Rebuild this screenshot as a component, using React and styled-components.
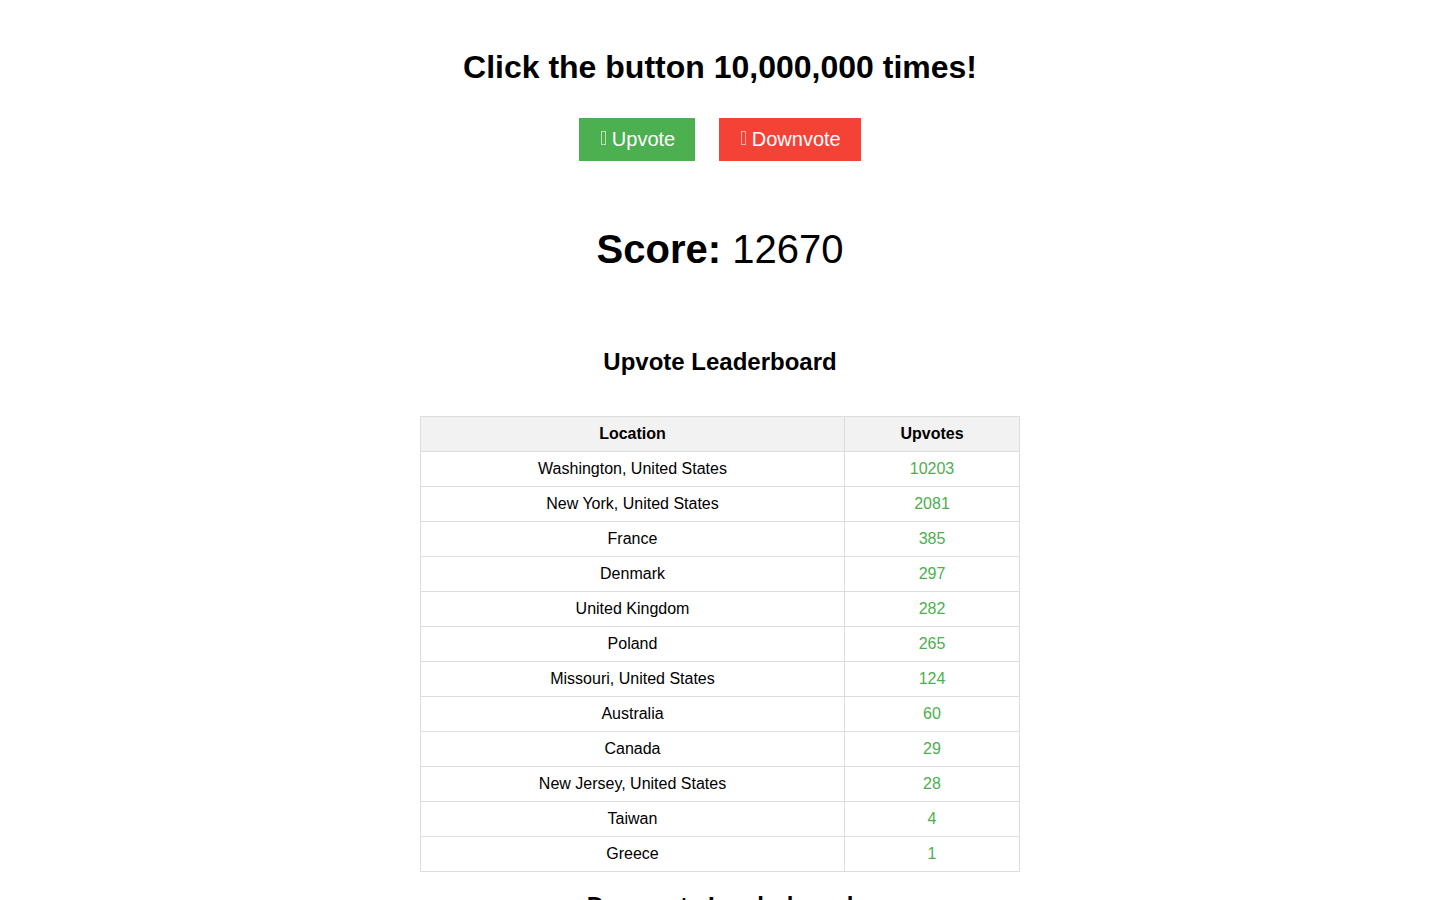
import React from "react";
import styled, { createGlobalStyle } from "styled-components";

const GlobalStyle = createGlobalStyle`
  html, body {
    margin: 0;
    padding: 0;
    background: #ffffff;
  }
  body {
    font-family: "Liberation Sans", Arial, sans-serif;
    color: #000000;
  }
`;

const Page = styled.main`
  display: flex;
  flex-direction: column;
  align-items: center;
  padding-top: 49px;
`;

const Title = styled.h1`
  margin: 0;
  font-size: 32px;
  font-weight: 700;
  line-height: 37px;
`;

const ButtonRow = styled.div`
  display: flex;
  gap: 24px;
  margin-top: 32px;
`;

const VoteButton = styled.button`
  border: none;
  border-radius: 0;
  padding: 10px 20px;
  font-family: "Liberation Sans", Arial, sans-serif;
  font-size: 20px;
  line-height: 23px;
  color: #ffffff;
  background: ${(p) => (p.$kind === "down" ? "#f44336" : "#4caf50")};
  cursor: pointer;
`;

/* Placeholder box where the icon-font glyph would sit */
const IconBox = styled.span`
  display: inline-block;
  box-sizing: border-box;
  width: 5px;
  height: 14px;
  margin: 0 0 0 2px;
  border: 1px solid rgba(255, 255, 255, 0.6);
  vertical-align: 1px;
`;

const Score = styled.div`
  margin-top: 65px;
  font-size: 40px;
  line-height: 46px;
  strong {
    font-weight: 700;
  }
`;

const SectionTitle = styled.h2`
  margin: ${(p) => p.$top}px 0 0;
  font-size: 24px;
  font-weight: 700;
  line-height: 28px;
`;

const Board = styled.table`
  margin-top: 40px;
  width: 600px;
  border-collapse: collapse;
  font-size: 16px;
`;

const HeadCell = styled.th`
  background: #f2f2f2;
  border: 1px solid #dddddd;
  padding: 8px;
  font-weight: 700;
  line-height: 18px;
  text-align: center;
  width: ${(p) => p.$w || "auto"};
`;

const Cell = styled.td`
  border: 1px solid #dddddd;
  padding: 8px;
  line-height: 18px;
  text-align: center;
  color: ${(p) => (p.$count ? "#4caf50" : "#000000")};
`;

const rows = [
  ["Washington, United States", 10203],
  ["New York, United States", 2081],
  ["France", 385],
  ["Denmark", 297],
  ["United Kingdom", 282],
  ["Poland", 265],
  ["Missouri, United States", 124],
  ["Australia", 60],
  ["Canada", 29],
  ["New Jersey, United States", 28],
  ["Taiwan", 4],
  ["Greece", 1],
];

export default function App() {
  return (
    <>
      <GlobalStyle />
      <Page>
        <Title>Click the button 10,000,000 times!</Title>
        <ButtonRow>
          <VoteButton $kind="up">
            <IconBox /> Upvote
          </VoteButton>
          <VoteButton $kind="down">
            <IconBox /> Downvote
          </VoteButton>
        </ButtonRow>
        <Score>
          <strong>Score:</strong> 12670
        </Score>
        <SectionTitle $top={76}>Upvote Leaderboard</SectionTitle>
        <Board>
          <thead>
            <tr>
              <HeadCell $w="407px">Location</HeadCell>
              <HeadCell>Upvotes</HeadCell>
            </tr>
          </thead>
          <tbody>
            {rows.map(([place, count]) => (
              <tr key={place}>
                <Cell>{place}</Cell>
                <Cell $count>{count}</Cell>
              </tr>
            ))}
          </tbody>
        </Board>
        <SectionTitle $top={20}>Downvote Leaderboard</SectionTitle>
      </Page>
    </>
  );
}
